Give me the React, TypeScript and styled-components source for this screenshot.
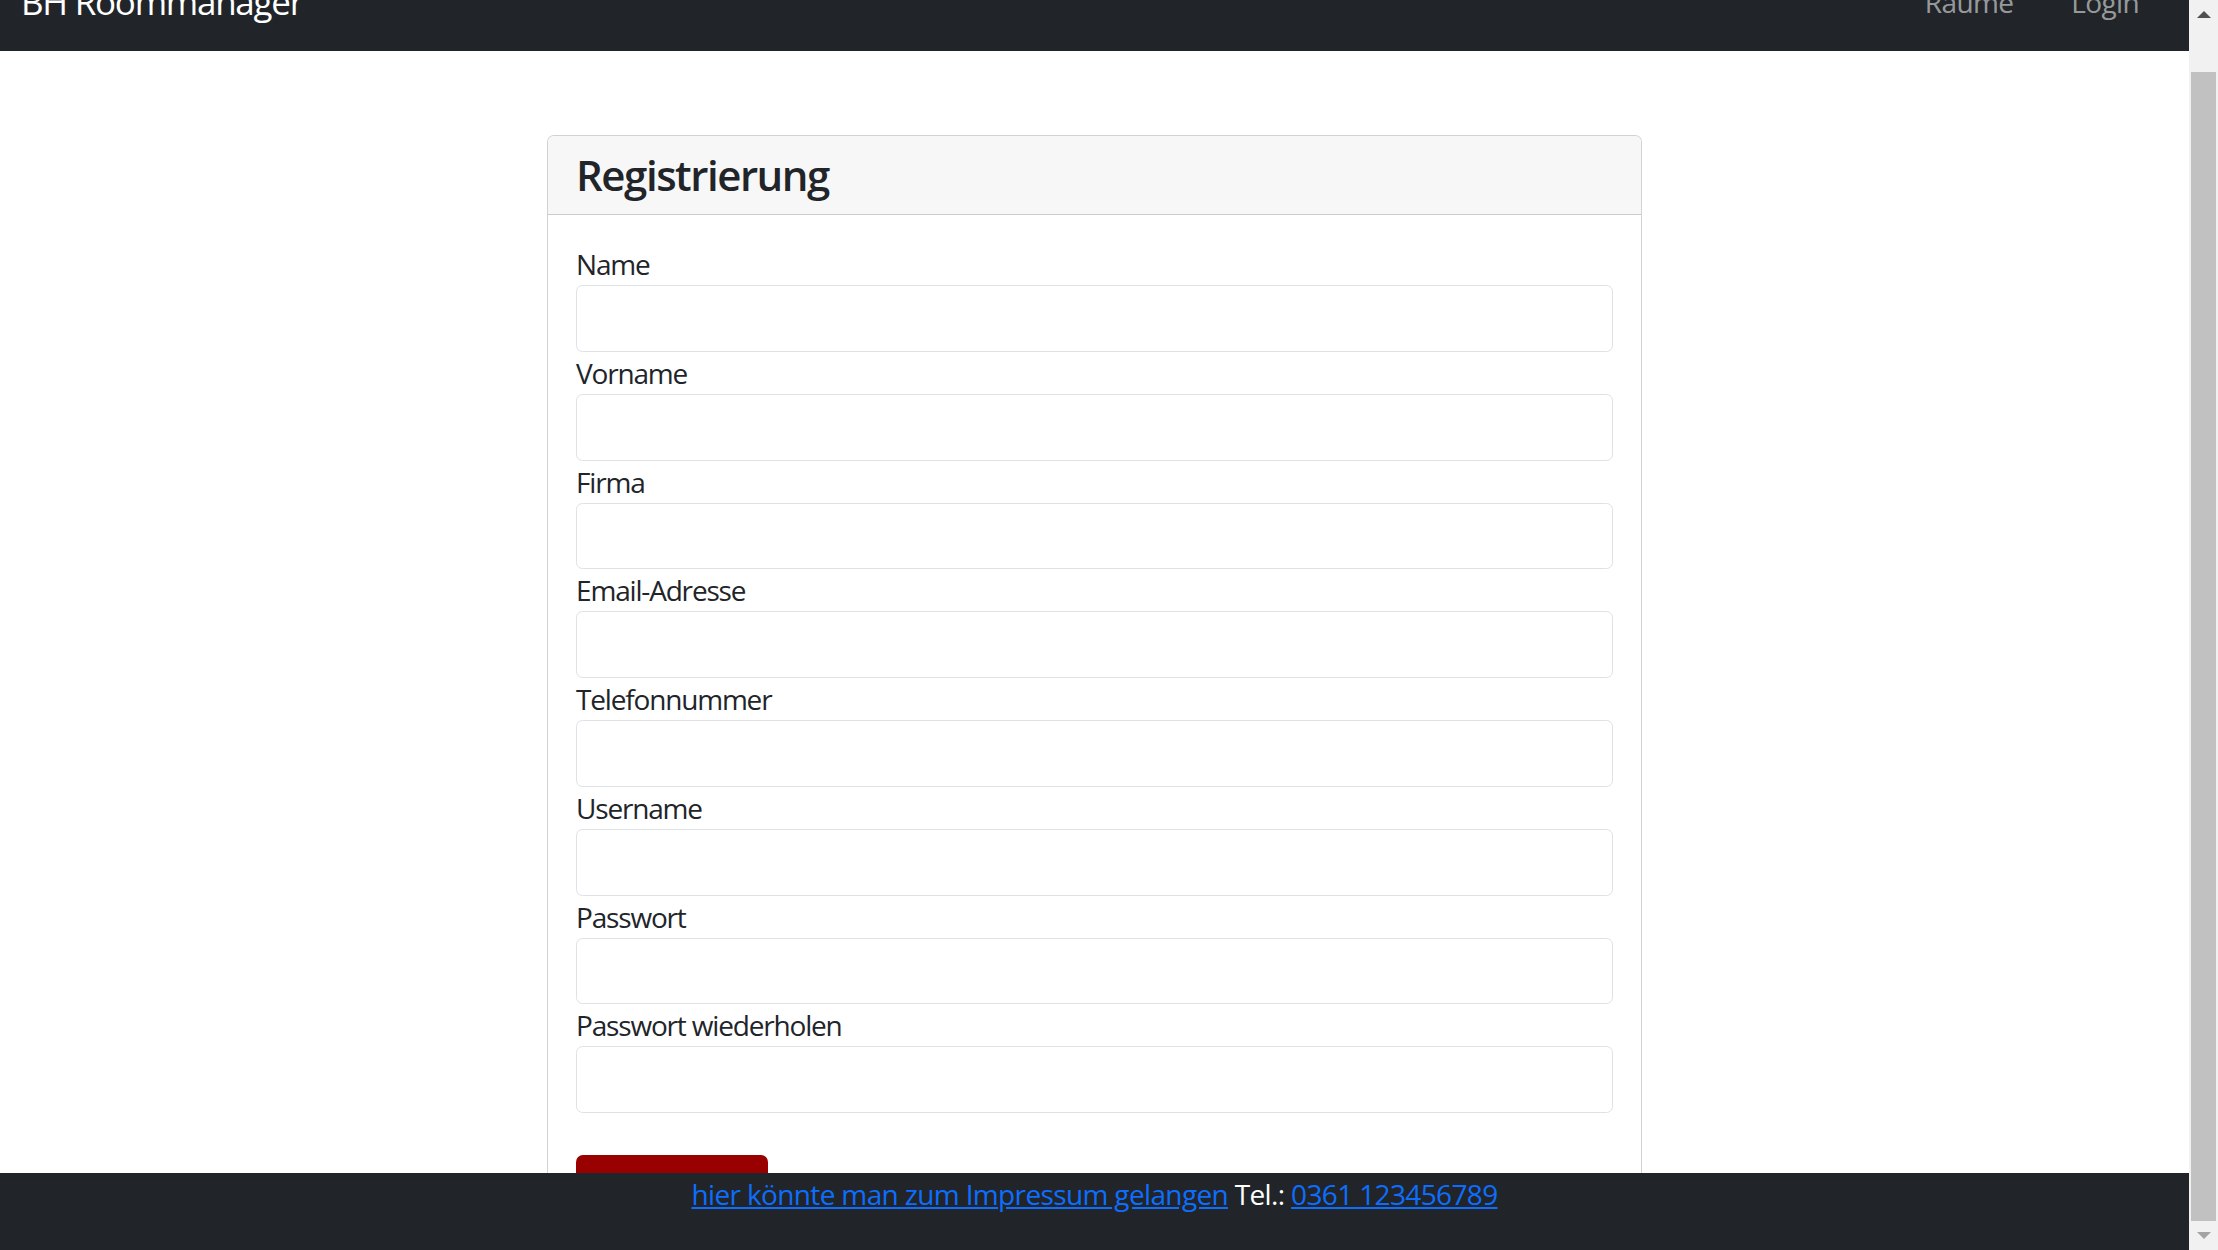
import React, { useLayoutEffect, useRef } from "react";
import styled, { createGlobalStyle } from "styled-components";

const GlobalStyle = createGlobalStyle`
  html, body {
    margin: 0;
    padding: 0;
    height: 100%;
    overflow: hidden;
  }
  body {
    font-family: "Open Sans", "Noto Sans", sans-serif;
    color: #212529;
    background: #fff;
    letter-spacing: -0.04em;
  }
  #root { height: 100%; }
  *, *::before, *::after { box-sizing: border-box; }
`;

const Screen = styled.div`
  display: flex;
  width: 100vw;
  height: 100vh;
`;

const Viewport = styled.div`
  position: relative;
  flex: 1;
  min-width: 0;
  height: 100%;
`;

const Scroller = styled.div`
  height: 100%;
  overflow: hidden;
`;

const Navbar = styled.nav`
  display: flex;
  align-items: center;
  justify-content: space-between;
  padding: 14px 50px 14px 21px;
  background: #212529;
`;

const Brand = styled.a`
  padding: 5.5px 0;
  font-size: 35px;
  line-height: 52.5px;
  letter-spacing: -0.036em;
  color: #fff;
  text-decoration: none;
`;

const NavLinks = styled.div`
  display: flex;
  gap: 58px;
`;

const NavLink = styled.a`
  padding: 14px 0;
  font-size: 28px;
  line-height: 42px;
  color: rgba(255, 255, 255, 0.55);
  text-decoration: none;
`;

const Card = styled.section`
  width: 1095px;
  margin: 84px auto 0;
  background: #fff;
  border: 1px solid rgba(0, 0, 0, 0.175);
  border-radius: 7px;
  overflow: hidden;
`;

const CardHeader = styled.header`
  padding: 14px 28px;
  background: #f7f7f7;
  border-bottom: 1px solid rgba(0, 0, 0, 0.175);
`;

const Title = styled.h1`
  margin: 0;
  font-size: 42px;
  font-weight: 600;
  line-height: 50.4px;
  letter-spacing: -0.035em;
  color: #212529;
`;

const CardBody = styled.form`
  display: flex;
  flex-direction: column;
  padding: 28px;
`;

const Label = styled.label`
  display: block;
  font-size: 28px;
  line-height: 42px;
  letter-spacing: -0.042em;
  color: #212529;
`;

const Input = styled.input`
  display: block;
  width: 100%;
  height: 66.7px;
  padding: 10.5px 21px;
  font: inherit;
  font-size: 28px;
  color: #212529;
  background: #fff;
  border: 1px solid #dee2e6;
  border-radius: 6.5px;
  outline: none;
`;

const SubmitButton = styled.button`
  align-self: flex-start;
  width: 192px;
  height: 66.5px;
  margin-top: 42px;
  font-family: inherit;
  font-size: 28px;
  color: #fff;
  background: #990000;
  border: none;
  border-radius: 7px;
`;

const Footer = styled.footer`
  position: absolute;
  left: 0;
  right: 0;
  bottom: 0;
  height: 77px;
  background: #212529;
  color: #fff;
  text-align: center;
  font-size: 28px;
  line-height: 42px;
`;

const FooterLink = styled.a`
  color: #0d6efd;
  text-decoration: underline;
`;

const ScrollBar = styled.div`
  display: flex;
  flex-direction: column;
  flex: none;
  width: 29px;
  height: 100%;
  background: #f1f1f1;
`;

const ArrowButton = styled.div`
  display: flex;
  align-items: center;
  justify-content: center;
  height: 29px;
  flex: none;
`;

const Triangle = styled.span<{ $dir: "up" | "down"; $color: string }>`
  width: 0;
  height: 0;
  border-left: 7px solid transparent;
  border-right: 7px solid transparent;
  ${(p) =>
    p.$dir === "up"
      ? `border-bottom: 7px solid ${p.$color};`
      : `border-top: 7px solid ${p.$color};`}
`;

const Track = styled.div`
  display: flex;
  flex: 1;
  padding: 43px 2px 0;
`;

const Thumb = styled.div`
  flex: 1;
  background: #c1c1c1;
`;

const fields = [
  "Name",
  "Vorname",
  "Firma",
  "Email-Adresse",
  "Telefonnummer",
  "Username",
  "Passwort",
  "Passwort wiederholen",
];

export default function App() {
  const scrollRef = useRef<HTMLDivElement>(null);

  useLayoutEffect(() => {
    const el = scrollRef.current;
    if (el) el.scrollTop = el.scrollHeight;
  }, []);

  return (
    <>
      <GlobalStyle />
      <Screen>
        <Viewport>
          <Scroller ref={scrollRef}>
            <Navbar>
              <Brand href="#">BH Roommanager</Brand>
              <NavLinks>
                <NavLink href="#">Räume</NavLink>
                <NavLink href="#">Login</NavLink>
              </NavLinks>
            </Navbar>
            <Card>
              <CardHeader>
                <Title>Registrierung</Title>
              </CardHeader>
              <CardBody onSubmit={(e) => e.preventDefault()}>
                {fields.map((f) => (
                  <div key={f}>
                    <Label htmlFor={f}>{f}</Label>
                    <Input
                      id={f}
                      type={f.startsWith("Passwort") ? "password" : "text"}
                    />
                  </div>
                ))}
                <SubmitButton type="submit">Registrieren</SubmitButton>
              </CardBody>
            </Card>
          </Scroller>
          <Footer>
            <FooterLink href="#">hier könnte man zum Impressum gelangen</FooterLink>{" "}
            Tel.: <FooterLink href="#">0361 123456789</FooterLink>
          </Footer>
        </Viewport>
        <ScrollBar>
          <ArrowButton>
            <Triangle $dir="up" $color="#505050" />
          </ArrowButton>
          <Track>
            <Thumb />
          </Track>
          <ArrowButton>
            <Triangle $dir="down" $color="#a3a3a3" />
          </ArrowButton>
        </ScrollBar>
      </Screen>
    </>
  );
}
